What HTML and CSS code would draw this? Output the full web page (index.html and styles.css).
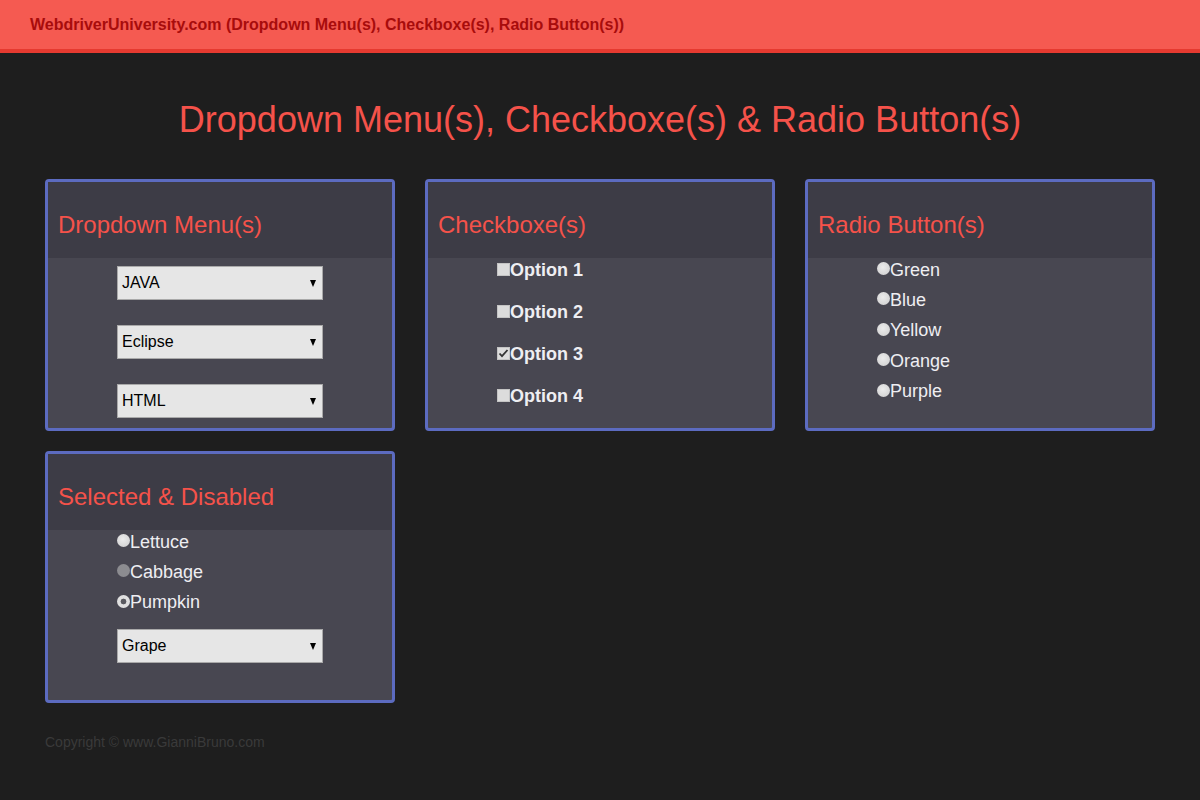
FILE: index.html
```html
<!DOCTYPE html>
<html>
<head>
<meta charset="utf-8">
<title>WebdriverUniversity.com (Dropdown Menu(s), Checkboxe(s), Radio Button(s))</title>
<link rel="stylesheet" href="styles.css">
</head>
<body>
<div class="topbar">
  <span class="brand">WebdriverUniversity.com (Dropdown Menu(s), Checkboxe(s), Radio Button(s))</span>
</div>
<h1 class="page-title">Dropdown Menu(s), Checkboxe(s) &amp; Radio Button(s)</h1>
<div class="grid">
  <section class="card">
    <div class="card-head"><h2>Dropdown Menu(s)</h2></div>
    <div class="card-body selects">
      <div class="select"><span>JAVA</span><i class="arrow"></i></div>
      <div class="select"><span>Eclipse</span><i class="arrow"></i></div>
      <div class="select"><span>HTML</span><i class="arrow"></i></div>
    </div>
  </section>
  <section class="card">
    <div class="card-head"><h2>Checkboxe(s)</h2></div>
    <div class="card-body checks">
      <label class="check"><span class="box"></span>Option 1</label>
      <label class="check"><span class="box"></span>Option 2</label>
      <label class="check"><span class="box"><svg viewBox="0 0 11 11" width="11" height="11"><path d="M1.5 5.5 L4 8.2 L9.5 2" fill="none" stroke="#333" stroke-width="1.8"/></svg></span>Option 3</label>
      <label class="check"><span class="box"></span>Option 4</label>
    </div>
  </section>
  <section class="card">
    <div class="card-head"><h2>Radio Button(s)</h2></div>
    <div class="card-body radios">
      <label class="radio"><span class="dot"></span>Green</label>
      <label class="radio"><span class="dot"></span>Blue</label>
      <label class="radio"><span class="dot"></span>Yellow</label>
      <label class="radio"><span class="dot"></span>Orange</label>
      <label class="radio"><span class="dot"></span>Purple</label>
    </div>
  </section>
  <section class="card">
    <div class="card-head"><h2>Selected &amp; Disabled</h2></div>
    <div class="card-body radios mixed">
      <label class="radio"><span class="dot"></span>Lettuce</label>
      <label class="radio"><span class="dot disabled"></span>Cabbage</label>
      <label class="radio"><span class="dot checked"></span>Pumpkin</label>
      <div class="select grape"><span>Grape</span><i class="arrow"></i></div>
    </div>
  </section>
</div>
<footer class="footer">Copyright © www.GianniBruno.com</footer>
</body>
</html>
```

FILE: styles.css
```css
* { box-sizing: border-box; }
html, body { margin: 0; padding: 0; }
body {
  background: #1e1e1e;
  font-family: "Liberation Sans", Arial, sans-serif;
  width: 1200px;
  height: 800px;
  overflow: hidden;
}
.topbar {
  height: 53px;
  background: #f55a51;
  border-bottom: 4px solid #e53a30;
  padding-left: 30px;
  display: flex;
  align-items: center;
}
.brand {
  color: #a80c0c;
  font-weight: bold;
  font-size: 16px;
  padding-top: 1px;
}
.page-title {
  margin: 46px 0 0;
  text-align: center;
  color: #f5524a;
  font-weight: normal;
  font-size: 36px;
  line-height: 42px;
}
.grid {
  margin: 38px 45px 0;
  display: grid;
  grid-template-columns: repeat(3, 350px);
  column-gap: 30px;
  row-gap: 20px;
}
.card {
  border: 3px solid #5c6bc0;
  border-radius: 4px;
  background: #484751;
  display: flex;
  flex-direction: column;
}
.card-head {
  background: #3d3c46;
  height: 76px;
  padding: 29px 10px 0;
}
.card-head h2 {
  margin: 0;
  color: #f5524a;
  font-weight: normal;
  font-size: 24px;
  line-height: 28px;
}
.card-body {
  flex: 1;
  padding-left: 69px;
  display: flex;
  flex-direction: column;
}
.selects {
  padding-top: 8px;
  padding-bottom: 10px;
  gap: 25px;
}
.select {
  width: 206px;
  height: 34px;
  background: #e6e6e6;
  border: 1px solid #a9a9a9;
  display: flex;
  align-items: center;
  justify-content: space-between;
  padding: 0 6px 0 4px;
  font-size: 16px;
  color: #000;
}
.arrow {
  width: 0;
  height: 0;
  border-left: 3.5px solid transparent;
  border-right: 3.5px solid transparent;
  border-top: 7px solid #000;
  margin-top: 1px;
}
.checks { gap: 18px; }
.check, .radio {
  height: 24px;
  display: flex;
  align-items: center;
  color: #eeeef2;
  font-size: 18px;
}
.check { font-weight: bold; }
.box {
  width: 13px;
  height: 13px;
  background: #dcdcdc;
  border: 1px solid #c4c4c4;
  display: flex;
  align-items: center;
  justify-content: center;
  margin-top: -2px;
}
.box svg { display: block; }
.radios { gap: 6.4px; }
.dot {
  width: 13px;
  height: 13px;
  border-radius: 50%;
  background: radial-gradient(circle at 45% 40%, #ececec 0, #d6d6d6 70%, #c8c8c8 100%);
  margin-top: -3px;
}
.dot.disabled { background: #8c8c90; }
.dot.checked {
  background: radial-gradient(circle, #5a5a60 0 2.6px, #e0e0e0 3.2px);
}
.mixed { padding-bottom: 37px; }
.grape { margin-top: 7.6px; height: 34px; }
.footer {
  margin: 31px 45px 0;
  color: #3a3a3a;
  font-size: 14px;
}
```
